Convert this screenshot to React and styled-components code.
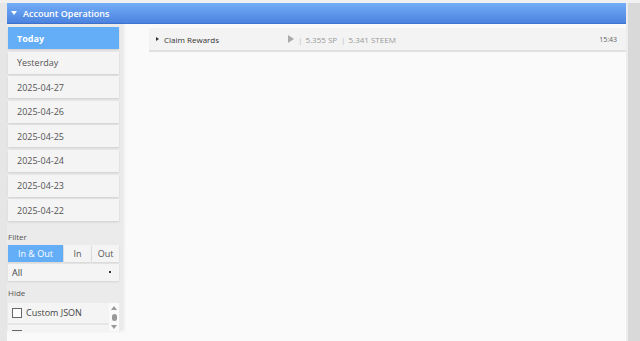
import React, { useState } from 'react';
import styled, { createGlobalStyle } from 'styled-components';

const GlobalStyle = createGlobalStyle`
  html, body {
    margin: 0;
    padding: 0;
    background: #e6e6e6;
    font-family: "Open Sans", "Noto Sans", sans-serif;
    overflow: hidden;
  }
`;

const Page = styled.div`
  display: flex;
  height: 341px;
  padding-left: 7px;
  border-top: 3px solid #f1f1f1;
  box-sizing: border-box;
`;

const Panel = styled.div`
  width: 619px;
  display: flex;
  flex-direction: column;
  background: #fafafa;
`;

const Gutter = styled.div`
  flex: 1;
  background: #d9d9d9;
  border-left: 2px solid #ececec;
`;

const Header = styled.div`
  height: 21px;
  display: flex;
  align-items: center;
  gap: 6px;
  padding-left: 4px;
  color: #fff;
  font-size: 9px;
  font-weight: 600;
  background: linear-gradient(#74adf8, #4b83df);
  border-bottom: 1px solid #3f74d2;
  box-sizing: border-box;
`;

const Caret = styled.span`
  width: 0;
  height: 0;
  border-left: 3.5px solid transparent;
  border-right: 3.5px solid transparent;
  border-top: 4px solid #fff;
`;

const Body = styled.div`
  flex: 1;
  display: flex;
  min-height: 0;
`;

const Sidebar = styled.div`
  width: 115px;
  height: 307px;
  padding: 3px 3px 0 1px;
  box-sizing: border-box;
  background: #ebebeb;
  box-shadow: 2px 0 3px rgba(0, 0, 0, 0.08);
  display: flex;
  flex-direction: column;
`;

const DayButton = styled.div`
  height: 22px;
  margin-bottom: 2.6px;
  padding-left: 9px;
  display: flex;
  align-items: center;
  font-size: 9px;
  font-weight: ${p => (p.active ? 700 : 400)};
  color: ${p => (p.active ? '#fff' : '#555')};
  background: ${p => (p.active ? '#64aef8' : '#f4f4f4')};
  box-shadow: 0 1px 2px rgba(0, 0, 0, 0.12);
`;

const Label = styled.div`
  font-size: 8px;
  color: #555;
  margin: ${p => p.gap || '8px'} 0 2px 0;
  line-height: 11px;
`;

const Segments = styled.div`
  display: flex;
  height: 17px;
  gap: 1px;
  margin-top: 1px;
`;

const Segment = styled.div`
  width: ${p => p.w}px;
  display: flex;
  align-items: center;
  justify-content: center;
  font-size: 9px;
  color: ${p => (p.active ? '#fff' : '#555')};
  background: ${p => (p.active ? '#64aef8' : '#f4f4f4')};
  box-shadow: 0 1px 2px rgba(0, 0, 0, 0.1);
`;

const Select = styled.div`
  margin-top: 2px;
  height: 17px;
  display: flex;
  align-items: center;
  justify-content: space-between;
  padding: 0 8px 0 4px;
  font-size: 9px;
  color: #444;
  background: #f4f4f4;
  box-shadow: 0 1px 2px rgba(0, 0, 0, 0.1);
  &::after {
    content: '';
    width: 2px;
    height: 2px;
    background: #333;
  }
`;

const HideList = styled.div`
  flex: 1;
  margin-top: 3px;
  position: relative;
  overflow: hidden;
  background: #f4f4f4;
`;

const HideItem = styled.label`
  height: 20px;
  display: flex;
  align-items: center;
  gap: 4px;
  padding-left: 4px;
  font-size: 9px;
  color: #444;
  white-space: nowrap;
  border-bottom: 2px solid #e6e6e6;
`;

const Box = styled.span`
  flex: none;
  width: 8px;
  height: 8px;
  border: 1px solid #666;
  background: #fff;
`;

const Scrollbar = styled.div`
  position: absolute;
  right: 0;
  top: 0;
  bottom: 0;
  width: 10px;
  background: #fafafa;
  display: flex;
  flex-direction: column;
  align-items: center;
  justify-content: space-between;
  padding: 3px 0 2px;
  box-sizing: border-box;
`;

const Arrow = styled.span`
  width: 0;
  height: 0;
  border-left: 3px solid transparent;
  border-right: 3px solid transparent;
  ${p => (p.up ? 'border-bottom: 4px solid #999;' : 'border-top: 4px solid #999;')}
`;

const Thumb = styled.span`
  width: 5px;
  height: 7px;
  border-radius: 3px;
  background: #999;
`;

const Main = styled.div`
  flex: 1;
  padding: 4px 0 0 27px;
`;

const OpRow = styled.div`
  height: 22px;
  display: flex;
  align-items: center;
  background: #f3f3f3;
  border-bottom: 2px solid #e0e0e0;
  font-size: 8px;
  color: #999;
  white-space: nowrap;
  padding: 0 9px 0 7px;
`;

const RowCaret = styled.span`
  width: 0;
  height: 0;
  border-top: 2.5px solid transparent;
  border-bottom: 2.5px solid transparent;
  border-left: 3px solid #333;
  margin-right: 5px;
`;

const OpName = styled.span`
  color: #333;
  width: 124px;
`;

const Play = styled.span`
  width: 0;
  height: 0;
  border-top: 4px solid transparent;
  border-bottom: 4px solid transparent;
  border-left: 6px solid #aaa;
`;

const Sep = styled.span`
  color: #bbb;
  margin: 0 3px 0 4px;
`;

const Time = styled.span`
  margin-left: auto;
  font-size: 7px;
  color: #666;
`;

const days = ['Today', 'Yesterday', '2025-04-27', '2025-04-26', '2025-04-25', '2025-04-24', '2025-04-23', '2025-04-22'];

export default function App() {
  const [day, setDay] = useState('Today');
  const [dir, setDir] = useState('In & Out');

  return (
    <>
      <GlobalStyle />
      <Page>
        <Panel>
          <Header>
            <Caret />
            Account Operations
          </Header>
          <Body>
            <Sidebar>
              {days.map(d => (
                <DayButton key={d} active={d === day} onClick={() => setDay(d)}>
                  {d}
                </DayButton>
              ))}
              <Label gap="7px">Filter</Label>
              <Segments>
                {[['In & Out', 55], ['In', 27], ['Out', 27]].map(([s, w]) => (
                  <Segment key={s} w={w} active={s === dir} onClick={() => setDir(s)}>
                    {s}
                  </Segment>
                ))}
              </Segments>
              <Select>All</Select>
              <Label gap="6px">Hide</Label>
              <HideList>
                <HideItem>
                  <Box />
                  Custom JSON
                </HideItem>
                <HideItem>
                  <Box />
                  Benefactor Reward
                </HideItem>
                <Scrollbar>
                  <Arrow up />
                  <Thumb />
                  <Arrow />
                </Scrollbar>
              </HideList>
            </Sidebar>
            <Main>
              <OpRow>
                <RowCaret />
                <OpName>Claim Rewards</OpName>
                <Play />
                <Sep>|</Sep>5.355 SP<Sep>|</Sep>5.341 STEEM
                <Time>15:43</Time>
              </OpRow>
            </Main>
          </Body>
        </Panel>
        <Gutter />
      </Page>
    </>
  );
}
